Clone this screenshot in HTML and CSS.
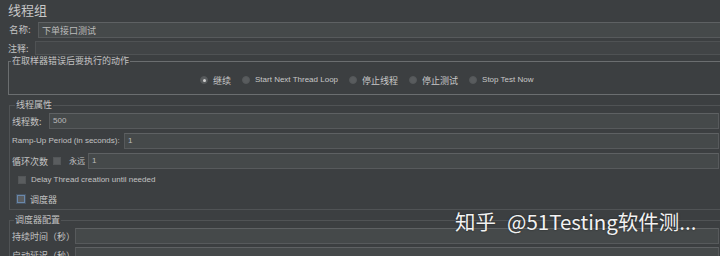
FILE: index.html
```html
<!DOCTYPE html>
<html>
<head>
<meta charset="utf-8">
<link rel="stylesheet" href="styles.css">
</head>
<body>
<div class="title">线程组</div>
<div class="row name-row">
  <span class="lbl cjk lbl-name">名称:</span>
  <div class="input name-input"><span class="cjk">下单接口测试</span></div>
</div>
<div class="row comment-row">
  <span class="lbl cjk lbl-comment">注释:</span>
  <div class="input comment-input"></div>
</div>
<fieldset class="group group-action">
  <legend class="cjk">在取样器错误后要执行的动作</legend>
  <div class="radios">
    <div class="radio-item"><span class="radio checked"></span><span class="cjk">继续</span></div>
    <div class="radio-item"><span class="radio"></span><span>Start Next Thread Loop</span></div>
    <div class="radio-item"><span class="radio"></span><span class="cjk">停止线程</span></div>
    <div class="radio-item"><span class="radio"></span><span class="cjk">停止测试</span></div>
    <div class="radio-item"><span class="radio"></span><span>Stop Test Now</span></div>
  </div>
</fieldset>
<fieldset class="group group-props">
  <legend class="cjk">线程属性</legend>
  <div class="row field-row first">
    <span class="lbl cjk lbl-threads">线程数:</span>
    <div class="input field-input"><span>500</span></div>
  </div>
  <div class="row field-row">
    <span class="lbl lbl-ramp">Ramp-Up Period (in seconds):</span>
    <div class="input field-input"><span>1</span></div>
  </div>
  <div class="row field-row">
    <span class="lbl cjk lbl-loop">循环次数</span>
    <span class="check"></span>
    <span class="lbl cjk lbl-forever">永远</span>
    <div class="input field-input"><span>1</span></div>
  </div>
  <div class="row check-row delay-row">
    <span class="check"></span>
    <span>Delay Thread creation until needed</span>
  </div>
  <div class="row check-row sched-row">
    <span class="check focused"></span>
    <span class="cjk">调度器</span>
  </div>
</fieldset>
<fieldset class="group group-sched">
  <legend class="cjk">调度器配置</legend>
  <div class="row field-row first">
    <span class="lbl cjk lbl-duration">持续时间（秒）</span>
    <div class="input field-input"></div>
  </div>
  <div class="row field-row second">
    <span class="lbl cjk lbl-duration">启动延迟（秒）</span>
    <div class="input field-input"></div>
  </div>
</fieldset>
<div class="watermark"><span class="wm-brand">知乎</span>@51Testing软件测...</div>
</body>
</html>
```
FILE: styles.css
```css
html, body {
  margin: 0;
  padding: 0;
}
body {
  width: 720px;
  height: 256px;
  overflow: hidden;
  position: relative;
  background: #3c3f41;
  color: #c2c2c2;
  font-family: "Liberation Sans", "Noto Sans CJK SC", sans-serif;
  font-size: 8px;
  line-height: 1;
}
.cjk {
  font-family: "Noto Sans CJK SC", sans-serif;
  font-size: 9px;
}
.title {
  height: 20px;
  line-height: 20px;
  padding-left: 8px;
  font-family: "Noto Sans CJK SC", sans-serif;
  font-size: 13px;
  color: #c8c8c8;
}
.row {
  display: flex;
  align-items: center;
}
.lbl {
  flex: none;
  white-space: nowrap;
}
.input {
  flex: 1;
  align-self: stretch;
  box-sizing: border-box;
  background: #45494a;
  border: 1px solid #575a5c;
  border-top-color: #5e6163;
  display: flex;
  align-items: center;
  padding-left: 3px;
  color: #bbbbbb;
}
.name-row {
  margin-top: 2px;
  height: 16px;
}
.lbl-name {
  width: 29px;
  padding-left: 9px;
  font-size: 9.5px;
}
.name-input {
  margin-right: -4px;
}
.comment-row {
  margin-top: 3px;
  height: 14px;
}
.lbl-comment {
  width: 27px;
  padding-left: 8px;
}
.comment-input {
  margin-right: -4px;
  background: #414446;
  border-color: #4f5254;
}

.group {
  margin: 0;
  padding: 0;
  border: 1px solid #5c5f61;
  min-width: 0;
}
.group legend {
  padding: 0 1px;
  margin-left: 2px;
  line-height: 10px;
  height: 10px;
  color: #c2c2c2;
}
.group-action {
  margin: 1px -10px 0 8px;
  border-color: #6b6e70;
  padding-bottom: 8px;
}
.radios {
  display: flex;
  align-items: center;
  gap: 11px;
  height: 12px;
  margin-top: 8px;
  padding-left: 191px;
}
.radio-item {
  display: flex;
  align-items: center;
  gap: 5px;
  white-space: nowrap;
  color: #c8c8c8;
}
.radio {
  width: 8px;
  height: 8px;
  border-radius: 50%;
  background: #595c5e;
  box-sizing: border-box;
  border: 1px solid #55585a;
  display: flex;
  align-items: center;
  justify-content: center;
}
.radio.checked::after {
  content: "";
  width: 3px;
  height: 3px;
  border-radius: 50%;
  background: #d0d0d0;
}

.group-props {
  margin: 5px -2px 0 9px;
  border-color: #505355;
  padding: 0 0 4px 2px;
}
.group-props legend {
  margin-left: 3px;
}
.field-row {
  height: 16px;
  margin-top: 4px;
}
.field-row.first {
  margin-top: 3px;
}
.field-input {
  margin-right: 2px;
}
.lbl-threads {
  width: 37px;
}
.lbl-ramp {
  width: 112px;
}
.lbl-loop {
  width: 41px;
}
.lbl-forever {
  width: 19px;
  margin-left: 8px;
  font-size: 8px;
}
.check {
  flex: none;
  width: 8px;
  height: 8px;
  box-sizing: border-box;
  background: #5a5d5f;
  border: 1px solid #535658;
}
.check.focused {
  border-color: #6a88aa;
  background: #5a5d60;
  box-shadow: 0 0 0 1px rgba(90, 120, 160, 0.35);
}
.check-row {
  height: 12px;
  gap: 5px;
  padding-left: 6px;
}
.delay-row {
  margin-top: 5px;
}
.sched-row {
  margin-top: 7px;
  padding-left: 5px;
}
.group-sched {
  margin: 5px -2px 0 9px;
  border-color: #505355;
  border-bottom: none;
  padding: 0 0 0 2px;
}
.lbl-duration {
  width: 63px;
}
.field-row.second {
  margin-top: 3px;
}
.watermark {
  position: absolute;
  left: 455px;
  top: 208px;
  font-family: "Noto Sans CJK SC", sans-serif;
  font-size: 20.5px;
  line-height: 26px;
  color: #f2f2f2;
  text-shadow: 0 0 2px rgba(0, 0, 0, 0.55);
  white-space: nowrap;
}
.wm-brand {
  margin-right: 11px;
}
```
